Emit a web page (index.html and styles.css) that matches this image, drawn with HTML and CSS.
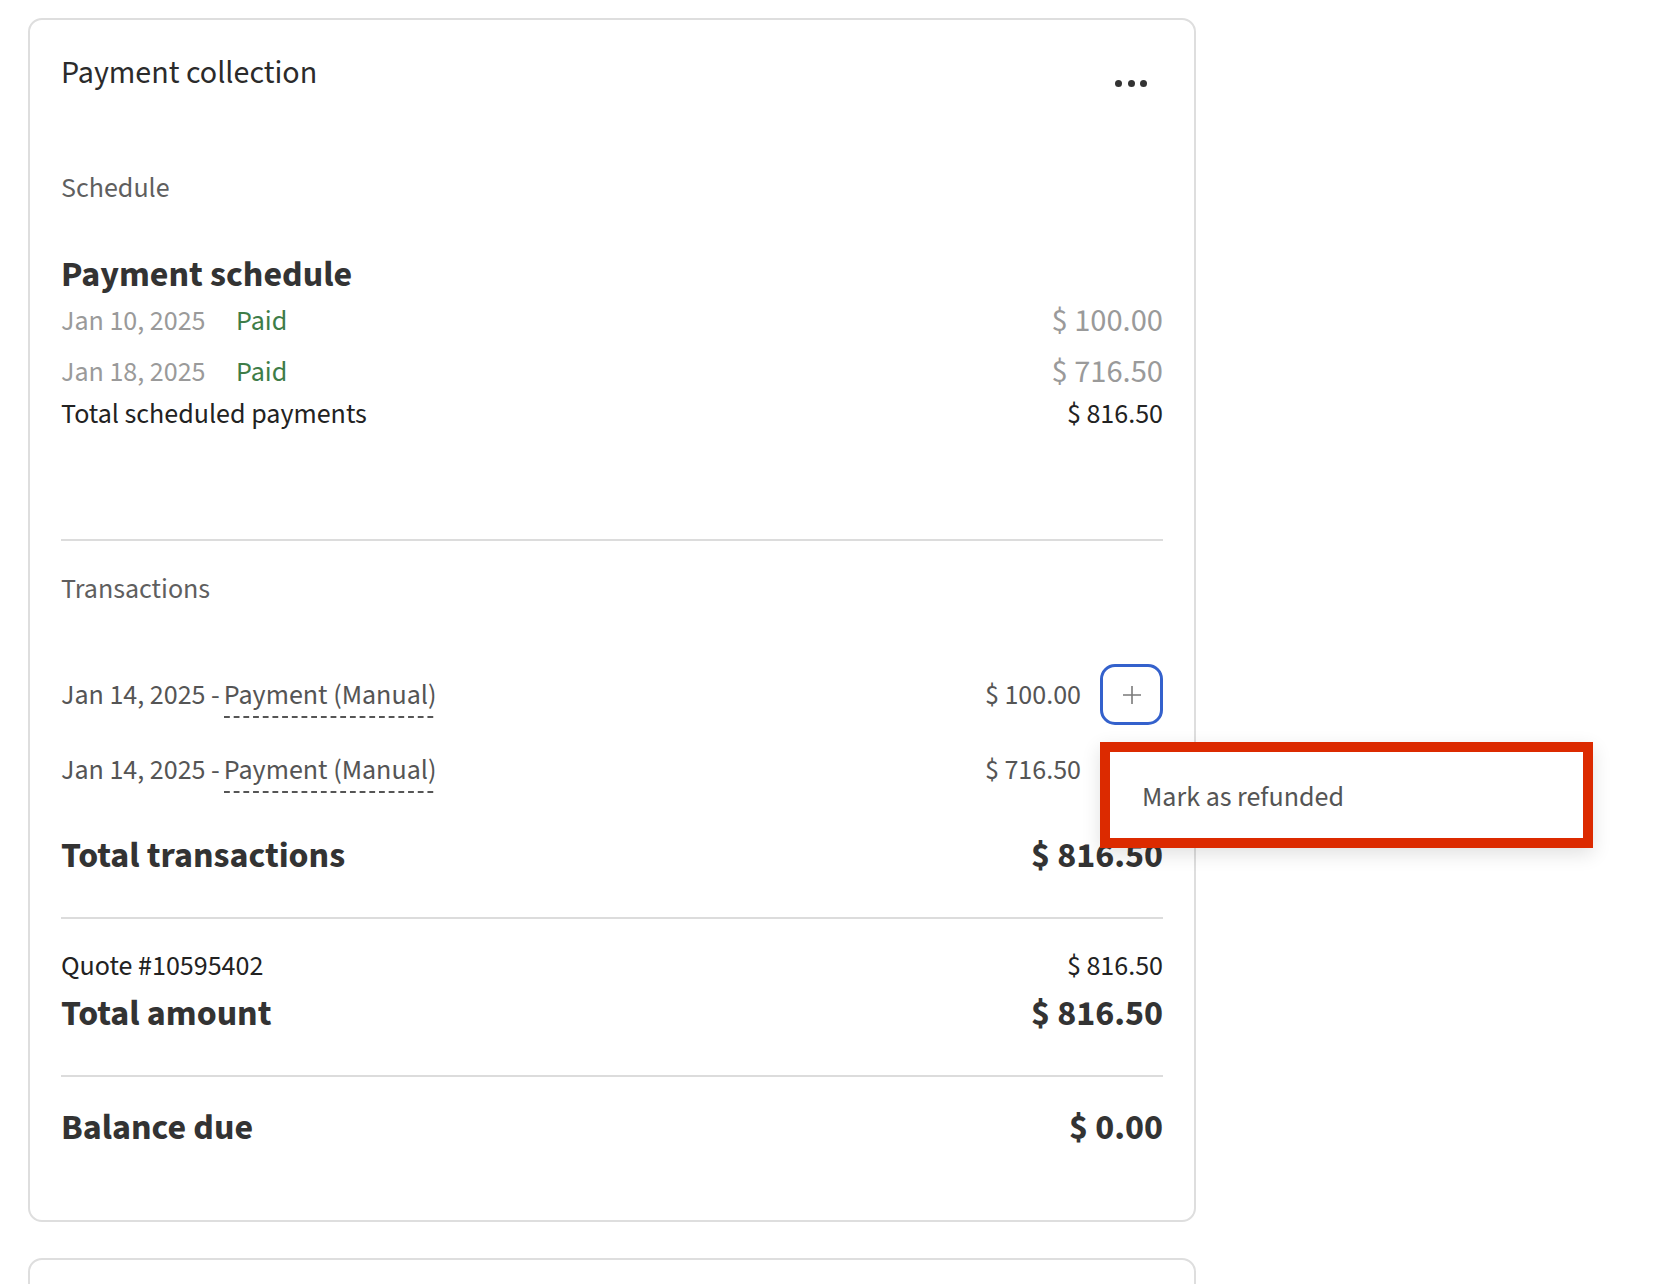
FILE: index.html
```html
<!DOCTYPE html>
<html lang="en">
<head>
    <meta charset="UTF-8">
    <title>Payment collection</title>
    <link rel="stylesheet" href="styles.css">
</head>
<body>
    <div class="page">
        <!-- Payment collection card -->
        <div class="card">
            <div class="card-header">
                <h2 class="card-title">Payment collection</h2>
                <button class="more-button" aria-label="More actions">
                    <span class="dot"></span><span class="dot"></span><span class="dot"></span>
                </button>
            </div>

            <div class="section-label schedule-label">Schedule</div>
            <h3 class="block-title">Payment schedule</h3>

            <div class="schedule-row">
                <span class="schedule-date">Jan 10, 2025</span>
                <span class="status-paid">Paid</span>
                <span class="schedule-amount">$ 100.00</span>
            </div>
            <div class="schedule-row">
                <span class="schedule-date">Jan 18, 2025</span>
                <span class="status-paid">Paid</span>
                <span class="schedule-amount">$ 716.50</span>
            </div>
            <div class="line-row total-scheduled">
                <span>Total scheduled payments</span>
                <span>$ 816.50</span>
            </div>

            <hr class="divider divider-schedule">

            <div class="section-label transactions-label">Transactions</div>

            <div class="transaction-row first">
                <div class="transaction-info">
                    Jan 14, 2025 -<span class="transaction-type">Payment (Manual)</span>
                </div>
                <span class="transaction-amount">$ 100.00</span>
                <div class="action-slot">
                    <button class="add-button" aria-label="Actions">
                        <svg width="20" height="20" viewBox="0 0 20 20">
                            <path d="M10 1v18M1 10h18" stroke="#7a7a7a" stroke-width="1.6" fill="none"/>
                        </svg>
                    </button>
                    <div class="action-menu">
                        <div class="menu-item">Mark as refunded</div>
                    </div>
                </div>
            </div>
            <div class="transaction-row">
                <div class="transaction-info">
                    Jan 14, 2025 -<span class="transaction-type">Payment (Manual)</span>
                </div>
                <span class="transaction-amount">$ 716.50</span>
                <div class="action-slot"></div>
            </div>

            <div class="line-row bold-row total-transactions">
                <span>Total transactions</span>
                <span>$ 816.50</span>
            </div>

            <hr class="divider divider-totals">

            <div class="line-row quote-row">
                <span>Quote #10595402</span>
                <span>$ 816.50</span>
            </div>
            <div class="line-row bold-row total-amount">
                <span>Total amount</span>
                <span>$ 816.50</span>
            </div>

            <hr class="divider divider-amount">

            <div class="line-row bold-row balance-row">
                <span>Balance due</span>
                <span>$ 0.00</span>
            </div>
        </div>

        <!-- Next card (cut off) -->
        <div class="card card-next"></div>
    </div>
</body>
</html>
```

FILE: styles.css
```css
* {
    margin: 0;
    padding: 0;
    box-sizing: border-box;
}

body, html {
    background: white;
    font-family: 'Source Sans Pro', 'Source Sans 3', Lato, sans-serif;
    color: #333;
    overflow: hidden;
}

.page {
    padding: 18px 0 0 28px;
}

.card {
    width: 1168px;
    border: 2px solid #dedede;
    border-radius: 14px;
    padding: 33px 31px 70px 31px;
    background: white;
}

.card-next {
    margin-top: 36px;
    height: 120px;
    padding: 0;
}

/* Header */
.card-header {
    display: flex;
    justify-content: space-between;
    align-items: flex-start;
}

.card-title {
    margin-top: 2px;
    font-size: 32px;
    font-weight: 400;
    line-height: 36px;
    color: #2b2b2b;
}

.more-button {
    width: 48px;
    height: 48px;
    margin-top: 6px;
    margin-right: 8px;
    border: none;
    background: transparent;
    display: flex;
    align-items: center;
    justify-content: center;
    gap: 5.5px;
    cursor: pointer;
}

.dot {
    width: 7px;
    height: 7px;
    border-radius: 50%;
    background-color: #333;
}

/* Section labels */
.section-label {
    font-size: 28px;
    line-height: 32px;
    color: #5f5f5f;
}

.schedule-label {
    margin-top: 65px;
}

.transactions-label {
    margin-top: 32px;
}

.block-title {
    margin-top: 51px;
    font-size: 36px;
    font-weight: 700;
    line-height: 40px;
    color: #333;
}

/* Schedule rows */
.schedule-row {
    display: flex;
    align-items: center;
    height: 51px;
    font-size: 28px;
}

.schedule-date {
    width: 175px;
    color: #9a9a9a;
}

.status-paid {
    color: #3e7d48;
}

.schedule-amount {
    margin-left: auto;
    font-size: 32.5px;
    color: #9a9a9a;
}

.line-row {
    display: flex;
    justify-content: space-between;
    align-items: center;
    font-size: 28px;
    line-height: 34px;
    color: #222;
}

.bold-row {
    font-size: 36px;
    font-weight: 700;
    line-height: 44px;
    color: #333;
}

.divider {
    border: none;
    height: 2px;
    background-color: #dcdcdc;
}

.divider-schedule {
    margin-top: 108px;
}

.divider-totals,
.divider-amount {
    margin-top: 39px;
}

.quote-row {
    margin-top: 30px;
}

.total-amount {
    margin-top: 9px;
}

.balance-row {
    margin-top: 29px;
}

.total-transactions {
    margin-top: 34px;
}

/* Transactions */
.transaction-row {
    display: flex;
    align-items: center;
    height: 61px;
    margin-top: 14px;
    font-size: 28px;
    color: #555;
}

.transaction-row.first {
    margin-top: 59px;
}

.transaction-type {
    margin-left: 4px;
    padding-bottom: 3px;
    background-image: linear-gradient(to right, #555 62%, transparent 0);
    background-size: 9.7px 2px;
    background-repeat: repeat-x;
    background-position: left bottom;
}

.transaction-amount {
    margin-left: auto;
}

.action-slot {
    position: relative;
    width: 63px;
    height: 61px;
    margin-left: 19px;
}

.add-button {
    width: 63px;
    height: 61px;
    border: 3px solid #3461cc;
    border-radius: 15px;
    background: white;
    display: flex;
    align-items: center;
    justify-content: center;
    cursor: pointer;
}

/* Dropdown menu (highlighted) */
.action-menu {
    position: absolute;
    top: 78px;
    left: 0;
    width: 493px;
    height: 106px;
    border: 10px solid #dc2a00;
    padding-top: 4px;
    background: white;
    box-shadow: 0 6px 18px rgba(0, 0, 0, 0.12);
    display: flex;
    align-items: center;
    z-index: 10;
}

.menu-item {
    padding-left: 32px;
    font-size: 28px;
    color: #555;
}
```
